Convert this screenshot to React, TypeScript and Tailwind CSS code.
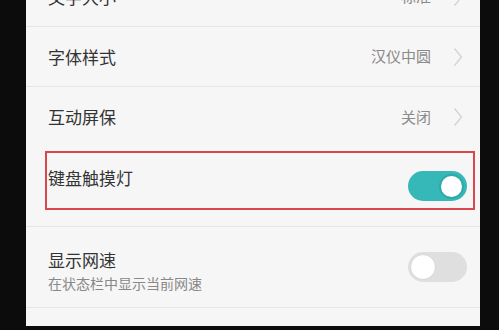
import React from 'react';

const font = { fontFamily: '"Noto Sans CJK SC", "Noto Sans", sans-serif' };

function Chevron() {
  return (
    <svg width="10" height="20" viewBox="0 0 10 20" className="ml-[22px]">
      <polyline points="1.5,1.5 8.5,10 1.5,18.5" fill="none" stroke="#d2d2d2" strokeWidth="1.3" />
    </svg>
  );
}

function Toggle({ on }: { on: boolean }) {
  return on ? (
    <div className="w-[59px] h-[30px] rounded-full bg-[#36b8b8] flex items-center justify-end pr-[3px]">
      <div className="w-[25px] h-[25px] rounded-full bg-white border-2 border-[#2fa9a9]" />
    </div>
  ) : (
    <div className="w-[59px] h-[30px] rounded-full bg-[#dfdfdf] flex items-center pl-[2px]">
      <div className="w-[26px] h-[26px] rounded-full bg-white border border-[#d6d6d6]" />
    </div>
  );
}

function LinkRow({ title, value, className }: { title: string; value: string; className?: string }) {
  return (
    <div className={`h-[60px] flex items-center pl-[22px] pr-[17px] border-b border-[#e6e6e6] ${className ?? ''}`}>
      <span className="flex-1 text-[17px] text-[#333]">{title}</span>
      <span className="text-[15px] text-[#8a8a8a]">{value}</span>
      <Chevron />
    </div>
  );
}

export default function App() {
  return (
    <div className="w-[499px] h-[330px] bg-[#0c0c0c] flex overflow-hidden" style={font}>
      <div className="w-[26px] shrink-0" />
      <div className="w-[454px] h-[326px] bg-[#f6f6f6] overflow-hidden">
        <LinkRow title="文字大小" value="标准" className="-mt-[33px]" />
        <LinkRow title="字体样式" value="汉仪中圆" />
        <LinkRow title="互动屏保" value="关闭" className="border-b-0" />

        {/* highlighted row */}
        <div className="h-[80px] pt-[4px] pl-[19px] pr-[5px] border-b border-[#e6e6e6]">
          <div className="h-[59px] border-2 border-[#d9474c] flex items-start justify-between pl-[1px] pr-[6px]">
            <span className="text-[17px] text-[#333] mt-[12px]">键盘触摸灯</span>
            <div className="mt-[18px]">
              <Toggle on />
            </div>
          </div>
        </div>

        <div className="h-[81px] flex items-center pl-[22px] pr-[13px] border-b border-[#e6e6e6]">
          <div className="flex-1 flex flex-col pt-[7px]">
            <span className="text-[17px] text-[#333] leading-[22px]">显示网速</span>
            <span className="text-[14px] text-[#888] leading-[20px] mt-[2px]">在状态栏中显示当前网速</span>
          </div>
          <Toggle on={false} />
        </div>

        <div className="h-[60px]" />
      </div>
      <div className="flex-1" />
    </div>
  );
}
